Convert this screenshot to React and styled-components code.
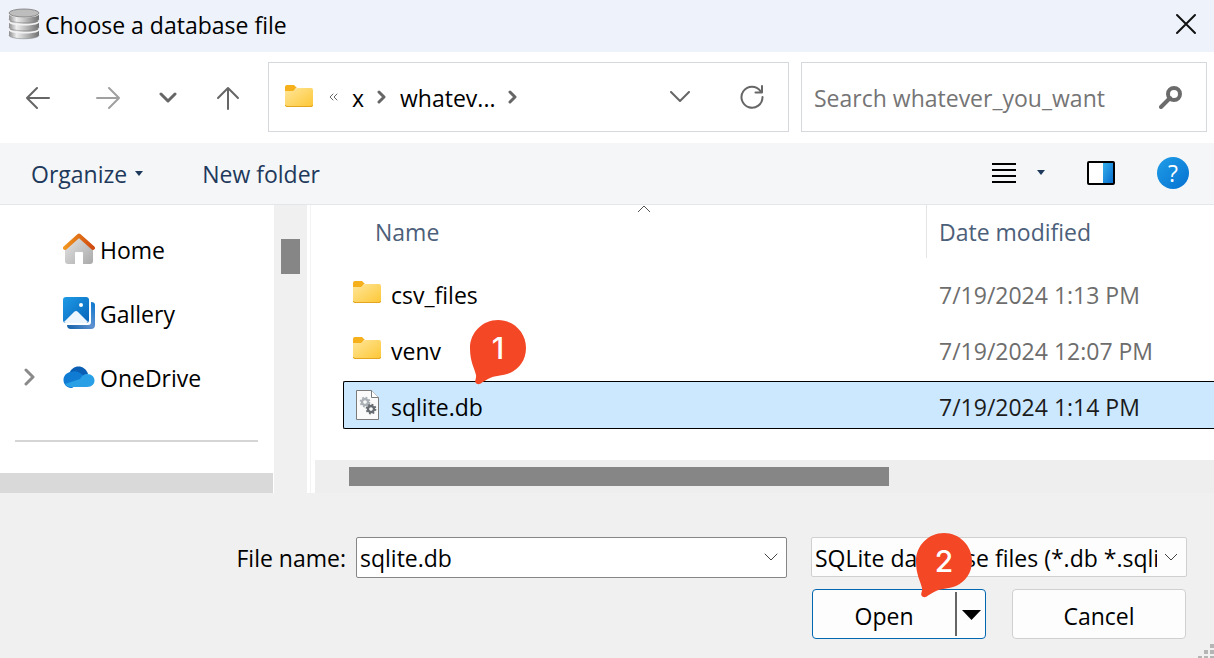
import React, { useState } from "react";
import styled, { createGlobalStyle } from "styled-components";

const GlobalStyle = createGlobalStyle`
  * {
    box-sizing: border-box;
  }
  body {
    margin: 0;
    background: #f0f0f0;
  }
  body, button, input, select {
    font-family: "Open Sans", "Noto Sans", sans-serif;
    font-size: 23px;
    line-height: 32px;
    color: #000;
  }
  button {
    padding: 0;
    border: 0;
    background: none;
  }
  svg {
    display: block;
    flex-shrink: 0;
  }
`;

const Dialog = styled.main`
  display: flex;
  flex-direction: column;
  min-height: 100vh;
  overflow: hidden;
`;

const TitleBar = styled.header`
  display: flex;
  align-items: center;
  gap: 5px;
  height: 52px;
  padding: 0 16px 5px 8px;
  background: #eef3fb;
`;

const Title = styled.h1`
  flex: 1;
  margin: 0;
  padding-top: 2px;
  font-size: 23px;
  font-weight: 400;
`;

const IconButton = styled.button`
  display: flex;
  align-items: center;
  justify-content: center;
  width: ${(props) => props.$width || 24}px;
  height: 36px;
`;

const NavBar = styled.nav`
  display: flex;
  gap: 12px;
  height: 91px;
  padding: 10px 7px 11px 26px;
  background: #fff;
`;

const NavButtons = styled.div`
  display: flex;
  align-items: center;
  gap: 36px;
  margin-right: 16px;
  padding-top: 2px;
  button:first-child {
    margin-right: 10px;
  }
`;

const AddressBar = styled.div`
  display: flex;
  flex: 1;
  align-items: center;
  min-width: 0;
  padding: 0 24px 0 15px;
  border: 1px solid #d5d8dc;
`;

const Crumbs = styled.div`
  display: flex;
  flex: 1;
  align-items: center;
  gap: 13px;
`;

const Crumb = styled.a`
  padding-top: 2px;
  color: #000;
  text-decoration: none;
`;

const AddressButtons = styled.div`
  display: flex;
  gap: 48px;
`;

const SearchBox = styled.label`
  display: flex;
  align-items: center;
  width: 406px;
  padding: 0 23px 0 12px;
  border: 1px solid #d5d8dc;
`;

const SearchInput = styled.input`
  flex: 1;
  min-width: 0;
  padding: 2px 0 0;
  border: 0;
  outline: 0;
  background: none;
  &::placeholder {
    color: #757575;
    opacity: 1;
  }
`;

const Toolbar = styled.div`
  display: flex;
  align-items: center;
  height: 62px;
  padding: 0 25px 0 31px;
  border-bottom: 1px solid #e4e7e9;
  background: #f4f6f8;
`;

const TextButton = styled.button`
  display: flex;
  align-items: center;
  gap: 8px;
  margin-right: 59px;
  color: #1e395b;
`;

const ToolbarRight = styled.div`
  display: flex;
  align-items: center;
  gap: 42px;
  margin-left: auto;
  padding-bottom: 2px;
`;

const ViewButton = styled(IconButton)`
  gap: 20px;
  width: 54px;
`;

const HelpButton = styled.button`
  width: 32px;
  height: 32px;
  border-radius: 50%;
  background: linear-gradient(135deg, #1f9de8, #0671d0);
  color: #fff;
`;

const Body = styled.div`
  display: flex;
  flex: 1;
  min-height: 288px;
  background: #fff;
`;

const Sidebar = styled.aside`
  display: flex;
  flex-direction: column;
  width: 274px;
`;

const Places = styled.ul`
  margin: 0;
  padding: 12px 0 31px;
  list-style: none;
`;

const Place = styled.li`
  display: grid;
  grid-template-columns: 40px auto 1fr;
  align-items: center;
  gap: 5px;
  height: 64px;
  padding-left: 18px;
`;

const PlaceLink = styled.a`
  padding-top: 2px;
  color: #000;
  text-decoration: none;
`;

const Separator = styled.hr`
  width: 243px;
  margin: 0 15px;
  border: 0;
  border-top: 2px solid #d5d5d5;
`;

const SidebarScroll = styled.div`
  width: 273px;
  height: 20px;
  margin-top: auto;
  background: #d9d9d9;
`;

const VerticalTrack = styled.div`
  width: 33px;
  padding: 34px 7px 0;
  background: #f0f0f0;
`;

const VerticalThumb = styled.div`
  height: 35px;
  background: #868686;
`;

const Splitter = styled.div`
  width: 8px;
  border-right: 4px solid #fff;
  border-left: 3px solid #fff;
  background: #f3f3f3;
`;

const ListPane = styled.section`
  display: flex;
  flex: 1;
  flex-direction: column;
  min-width: 0;
`;

const FileTable = styled.table`
  display: block;
  flex: 1;
  padding-left: 28px;
  thead, tbody {
    display: block;
  }
`;

const HeaderRow = styled.tr`
  display: grid;
  grid-template-columns: minmax(0, 1fr) 288px;
  height: 53px;
  margin-bottom: 11px;
`;

const HeaderCell = styled.th`
  position: relative;
  padding: 11px 0 0 ${(props) => (props.$divided ? 12 : 32)}px;
  border-left: ${(props) => (props.$divided ? "1px solid #e2e4e6" : 0)};
  color: #4c607a;
  font-weight: 400;
  text-align: left;
`;

const SortMark = styled.svg`
  position: absolute;
  top: 0;
  left: 294px;
`;

const FileRow = styled.tr`
  display: grid;
  grid-template-columns: minmax(0, 1fr) 288px;
  align-items: center;
  height: 48px;
  margin-bottom: 8px;
  border: 1px solid ${(props) => (props.$selected ? "#000" : "transparent")};
  border-right: 0;
  border-radius: 2px 0 0 2px;
  background: ${(props) => (props.$selected ? "#cce8ff" : "transparent")};
`;

const NameCell = styled.td`
  display: flex;
  align-items: center;
  gap: 9px;
  padding: 0 0 0 8px;
`;

const FileName = styled.span`
  position: relative;
  padding-top: 4px;
`;

const DateCell = styled.td`
  padding: 4px 0 0 13px;
  color: ${(props) => (props.$selected ? "#1b1b1b" : "#6d6d6d")};
`;

const HorizontalTrack = styled.div`
  height: 33px;
  padding: 7px 34px;
  background: #eee;
`;

const HorizontalThumb = styled.div`
  width: 65%;
  height: 19px;
  background: #868686;
`;

const Footer = styled.footer`
  position: relative;
  display: grid;
  grid-template-columns: 346px minmax(0, 1fr) 376px;
  grid-template-rows: 41px 50px;
  row-gap: 11px;
  height: 165px;
  padding: 44px 27px 0 0;
`;

const FieldLabel = styled.label`
  padding-top: 5px;
  text-align: right;
`;

const ComboBox = styled.div`
  display: flex;
  align-items: center;
  margin: 0 24px 0 10px;
  padding: 0 8px 0 3px;
  border: 1px solid #868686;
  border-radius: 2px;
  background: #fff;
`;

const ComboInput = styled.input`
  flex: 1;
  min-width: 0;
  padding: 0;
  border: 0;
  outline: 0;
  background: none;
`;

const FilterBox = styled.div`
  position: relative;
  height: 40px;
`;

const FilterSelect = styled.select`
  width: 100%;
  height: 40px;
  padding: 2px 29px 0 3px;
  border: 1px solid #d0d0d0;
  border-radius: 2px;
  background: #fdfdfd;
  appearance: none;
  overflow: hidden;
  text-overflow: clip;
`;

const FilterArrow = styled.svg`
  position: absolute;
  top: 16px;
  right: 9px;
  pointer-events: none;
`;

const Actions = styled.div`
  display: grid;
  grid-column: 3;
  grid-template-columns: 1fr 1fr;
  gap: 26px;
  padding: 0 1px;
`;

const SplitButton = styled.div`
  display: flex;
  align-items: center;
  border: 1px solid #0067b0;
  border-radius: 4px;
  background: #fdfdfd;
`;

const OpenButton = styled.button`
  flex: 1;
  padding-top: 3px;
`;

const OpenMenuButton = styled.button`
  display: flex;
  align-items: center;
  justify-content: center;
  width: 30px;
  height: 44px;
  padding-top: 2px;
  border-left: 2px solid #666;
`;

const CancelButton = styled.button`
  padding-top: 3px;
  border: 1px solid #d0d0d0;
  border-radius: 4px;
  background: #fdfdfd;
`;

const PinWrapper = styled.div`
  position: absolute;
  top: ${(props) => props.$top}px;
  left: ${(props) => props.$left}px;
  z-index: 1;
  width: 56px;
  height: 65px;
`;

const PinShape = styled.svg`
  position: absolute;
  inset: 0;
`;

const PinNumber = styled.span`
  position: relative;
  display: block;
  color: #fff;
  font-family: Inter, sans-serif;
  font-size: 30px;
  font-weight: 500;
  line-height: 56px;
  text-align: center;
`;

const SizeGrip = styled.svg`
  position: absolute;
  right: 0;
  bottom: 0;
`;

const Line = ({ d, w, h, color = "#666", stroke = 2 }) => (
  <svg width={w} height={h} viewBox={`0 0 ${w} ${h}`} fill="none">
    <path d={d} stroke={color} strokeWidth={stroke} strokeLinecap="round" strokeLinejoin="round" />
  </svg>
);

const CrumbChevron = () => <Line w={10} h={14} d="M2 2l5 5-5 5" stroke={3} />;

const DatabaseIcon = () => (
  <svg width="32" height="32" viewBox="0 0 32 32">
    <defs>
      <linearGradient id="metal">
        <stop offset="0" stopColor="#8d8d8d" />
        <stop offset=".25" stopColor="#eee" />
        <stop offset=".6" stopColor="#b5b5b5" />
        <stop offset="1" stopColor="#707070" />
      </linearGradient>
    </defs>
    {[19, 11, 3].map((y) => (
      <g key={y}>
        <path d={`M1 ${y + 2}v6c0 5 30 5 30 0v-6z`} fill="url(#metal)" />
        <path d={`M1 ${y + 2}c0 5 30 5 30 0`} fill="none" stroke="#f2f2f2" strokeWidth="1.500" />
        <path d={`M1 ${y + 8}c0 5 30 5 30 0`} fill="none" stroke="#888" strokeWidth=".6" />
      </g>
    ))}
    <ellipse cx="16" cy="5" rx="15" ry="4" fill="#bdbdbd" stroke="#777" strokeWidth=".8" />
  </svg>
);

const FolderIcon = () => (
  <svg width="30" height="26" viewBox="0 0 30 26">
    <defs>
      <linearGradient id="folder" x1="0" y1="0" x2="1" y2="1">
        <stop offset="0" stopColor="#ffe69a" />
        <stop offset="1" stopColor="#fdc735" />
      </linearGradient>
    </defs>
    <path d="M1 3q0-2 2-2h7l3 3h-1l-3 4H1z" fill="#f5b01c" />
    <path d="M1 7h8l4-3h14q2 0 2 2v15q0 2-2 2H3q-2 0-2-2z" fill="url(#folder)" />
    <path d="M1.500 21q0 1.500 1.500 1.500h24q1.500 0 1.500-1.500" fill="none" stroke="#e3a51f" />
  </svg>
);

const HomeIcon = () => (
  <svg width="32" height="32" viewBox="0 0 32 32">
    <defs>
      <linearGradient id="wall" x1="0" y1="0" x2="1" y2="1">
        <stop offset="0" stopColor="#e6e6e6" />
        <stop offset="1" stopColor="#a9a9a9" />
      </linearGradient>
      <linearGradient id="roof">
        <stop offset="0" stopColor="#f0951e" />
        <stop offset="1" stopColor="#cf4a10" />
      </linearGradient>
    </defs>
    <path d="M2 16L16 3l14 13v12q0 3-3 3h-7V20q0-1-1-1h-6q-1 0-1 1v11H5q-3 0-3-3z" fill="url(#wall)" />
    <path d="M2 15L16 2.500 30 15" fill="none" stroke="url(#roof)" strokeWidth="4" strokeLinecap="round" strokeLinejoin="round" />
  </svg>
);

const GalleryIcon = () => (
  <svg width="32" height="32" viewBox="0 0 32 32">
    <defs>
      <linearGradient id="photo" x1="0" y1="0" x2="1" y2="1">
        <stop offset="0" stopColor="#1e9be6" />
        <stop offset="1" stopColor="#0762b8" />
      </linearGradient>
      <linearGradient id="stack" x1="0" y1="1" x2="1" y2="0">
        <stop offset="0" stopColor="#0f5ea8" />
        <stop offset=".5" stopColor="#5f91cf" />
        <stop offset="1" stopColor="#0877cf" />
      </linearGradient>
    </defs>
    <path d="M28 5q4 0 4 3v20q0 4-4 4H8q-4 0-4-4h21q3 0 3-3z" fill="url(#stack)" />
    <rect width="26" height="26" rx="3" fill="url(#photo)" />
    <path d="M1 25l10-10q2-2 4 0l10 10q-1 1-2 1H3q-1 0-2-1z" fill="#edf5ff" />
    <circle cx="18" cy="8" r="2" fill="#fff" />
  </svg>
);

const OneDriveIcon = () => (
  <svg width="32" height="32" viewBox="0 0 32 32">
    <path d="M6 13C9 3 22 3 25 13l-7 5z" fill="#0a5fb4" />
    <path d="M8 11q5-2 9 1l7 5-15 10H8C-2 26-2 12 8 11z" fill="#0f7bd3" />
    <path d="M17 18q3-5 7-5c10 0 10 13 0 13H8q-4 0-6-3z" fill="#29a0e6" />
  </svg>
);

const Gear = ({ x, y, color }) => (
  <g transform={`translate(${x} ${y})`}>
    <circle r="3" fill="none" stroke={color} strokeWidth="2.400" />
    <circle r="4.500" fill="none" stroke={color} strokeWidth="1.800" strokeDasharray="1.800 1.734" />
  </g>
);

const DatabaseFileIcon = () => (
  <svg width="30" height="30" viewBox="0 0 30 30">
    <path d="M4.500.5h15l7 7v22h-22z" fill="#fafafa" stroke="#7b7b7b" />
    <path d="M19.500.5v7h7" fill="#fff" stroke="#7b7b7b" />
    <Gear x={13} y={12} color="#aab0b5" />
    <Gear x={19} y={19} color="#666c71" />
  </svg>
);

const Caret = ({ w = 8, h = 5, color = "#1e395b" }) => (
  <svg width={w} height={h} viewBox="0 0 8 4" preserveAspectRatio="none">
    <path d="M0 0h8L4 4z" fill={color} />
  </svg>
);

const Pin = ({ number, top, left }) => (
  <PinWrapper $top={top} $left={left}>
    <PinShape width="56" height="65" viewBox="0 0 56 65">
      <path
        d="M28 0C43.500 0 56 12.500 56 28c0 12-7 21-16 25-8 3-15 2-22 6l-6 3.500c-2 2-5 2.500-6.500 0-1-2 1-4 .5-7.500C4.500 48 0 42 0 28 0 12.500 12.500 0 28 0z"
        fill="#f44725"
      />
    </PinShape>
    <PinNumber>{number}</PinNumber>
  </PinWrapper>
);

const places = [
  { name: "Home", icon: <HomeIcon /> },
  { name: "Gallery", icon: <GalleryIcon /> },
  { name: "OneDrive", icon: <OneDriveIcon />, expandable: true },
];

const files = [
  { name: "csv_files", date: "7/19/2024 1:13 PM", folder: true },
  { name: "venv", date: "7/19/2024 12:07 PM", folder: true },
  { name: "sqlite.db", date: "7/19/2024 1:14 PM", pin: 1 },
];

function App() {
  const [fileName, setFileName] = useState("sqlite.db");

  return (
    <Dialog>
      <GlobalStyle />
      <TitleBar>
        <DatabaseIcon />
        <Title>Choose a database file</Title>
        <IconButton aria-label="Close">
          <Line w={22} h={22} d="M2 2l18 18M20 2L2 20" color="#111" />
        </IconButton>
      </TitleBar>

      <NavBar>
        <NavButtons>
          <IconButton aria-label="Back">
            <Line w={24} h={24} d="M23 12H1M11 2L1 12l10 10" />
          </IconButton>
          <IconButton aria-label="Forward">
            <Line w={24} h={24} d="M1 12h22M13 2l10 10-10 10" color="#a0a0a0" />
          </IconButton>
          <IconButton aria-label="Recent locations">
            <Line w={18} h={12} d="M2 2l7 7 7-7" stroke={3} />
          </IconButton>
          <IconButton aria-label="Up">
            <Line w={24} h={24} d="M12 23V2M2 12L12 2l10 10" />
          </IconButton>
        </NavButtons>
        <AddressBar>
          <Crumbs>
            <FolderIcon />
            <Line w={12} h={10} d="M6 2L3 5l3 3M10 2L7 5l3 3" stroke={1} />
            <Crumb href="#x">x</Crumb>
            <CrumbChevron />
            <Crumb href="#whatever">whatev...</Crumb>
            <CrumbChevron />
          </Crumbs>
          <AddressButtons>
            <IconButton aria-label="Previous locations">
              <Line w={20} h={12} d="M1 1l9 9 9-9" />
            </IconButton>
            <IconButton aria-label="Refresh">
              <Line w={24} h={24} d="M20.500 6A10.500 10.500 0 1 0 22.500 12M22 1v6.500h-6.500" />
            </IconButton>
          </AddressButtons>
        </AddressBar>
        <SearchBox>
          <SearchInput aria-label="Search" placeholder="Search whatever_you_want" />
          <svg width="24" height="24" viewBox="0 0 24 24" fill="none" stroke="#6b6b6b">
            <circle cx="15" cy="9" r="6" strokeWidth="4" />
            <path d="M11 13l-9 9" strokeWidth="4" strokeLinecap="round" />
          </svg>
        </SearchBox>
      </NavBar>

      <Toolbar>
        <TextButton>
          Organize
          <Caret />
        </TextButton>
        <TextButton>New folder</TextButton>
        <ToolbarRight>
          <ViewButton aria-label="Change your view">
            <svg width="26" height="20" viewBox="0 0 26 20">
              <path d="M1 1h24M1 7h24M1 13h24M1 19h24" stroke="#000" strokeWidth="2" />
            </svg>
            <Caret />
          </ViewButton>
          <IconButton $width={28} aria-label="Preview pane">
            <svg width="28" height="24" viewBox="0 0 28 24">
              <defs>
                <linearGradient id="pane" x1="0" y1="0" x2="1" y2="1">
                  <stop offset="0" stopColor="#37b1ec" />
                  <stop offset="1" stopColor="#0569cd" />
                </linearGradient>
              </defs>
              <rect x="1" y="1" width="26" height="22" rx="1" fill="#fff" />
              <path d="M16 1h11v22H16z" fill="url(#pane)" />
              <rect x="1" y="1" width="26" height="22" rx="1" fill="none" stroke="#000" strokeWidth="2" />
            </svg>
          </IconButton>
          <HelpButton>?</HelpButton>
        </ToolbarRight>
      </Toolbar>

      <Body>
        <Sidebar>
          <Places>
            {places.map((place) => (
              <Place key={place.name}>
                <div>
                  {place.expandable && (
                    <IconButton aria-label={`Expand ${place.name}`}>
                      <Line w={12} h={18} d="M2 2l7 7-7 7" stroke={3} color="#8a8a8a" />
                    </IconButton>
                  )}
                </div>
                {place.icon}
                <PlaceLink href={`#${place.name}`}>{place.name}</PlaceLink>
              </Place>
            ))}
          </Places>
          <Separator />
          <SidebarScroll />
        </Sidebar>
        <VerticalTrack>
          <VerticalThumb />
        </VerticalTrack>
        <Splitter />
        <ListPane>
          <FileTable>
            <thead>
              <HeaderRow>
                <HeaderCell>
                  Name
                  <SortMark width="14" height="9" viewBox="0 0 14 9" fill="none">
                    <path d="M1 7l6-6 6 6" stroke="#555" />
                  </SortMark>
                </HeaderCell>
                <HeaderCell $divided>Date modified</HeaderCell>
              </HeaderRow>
            </thead>
            <tbody>
              {files.map((file) => (
                <FileRow key={file.name} $selected={file.name === fileName}>
                  <NameCell>
                    {file.folder ? <FolderIcon /> : <DatabaseFileIcon />}
                    <FileName>
                      {file.name}
                      {file.pin && <Pin number={file.pin} top={-67} left={79} />}
                    </FileName>
                  </NameCell>
                  <DateCell $selected={file.name === fileName}>{file.date}</DateCell>
                </FileRow>
              ))}
            </tbody>
          </FileTable>
          <HorizontalTrack>
            <HorizontalThumb />
          </HorizontalTrack>
        </ListPane>
      </Body>

      <Footer>
        <FieldLabel htmlFor="file-name">File name:</FieldLabel>
        <ComboBox>
          <ComboInput id="file-name" value={fileName} onChange={(e) => setFileName(e.target.value)} />
          <IconButton $width={14} aria-label="Show recent files">
            <Line w={14} h={9} d="M1 1l6 6 6-6" stroke={1} color="#444" />
          </IconButton>
        </ComboBox>
        <FilterBox>
          <FilterSelect aria-label="File type">
            <option>SQLite database files (*.db *.sqlite)</option>
            <option>All files (*)</option>
          </FilterSelect>
          <FilterArrow width="14" height="9" viewBox="0 0 14 9" fill="none">
            <path d="M1 1l6 6 6-6" stroke="#444" />
          </FilterArrow>
          <Pin number={2} top={-4} left={105} />
        </FilterBox>
        <Actions>
          <SplitButton>
            <OpenButton>Open</OpenButton>
            <OpenMenuButton aria-label="Open options">
              <Caret w={19} h={10} color="#000" />
            </OpenMenuButton>
          </SplitButton>
          <CancelButton>Cancel</CancelButton>
        </Actions>
        <SizeGrip width="16" height="14" viewBox="0 0 16 14" fill="#b5b5b5">
          <path d="M12 0h4v4h-4zM6 6h4v4H6zM12 6h4v4h-4zM0 12h4v4H0zM6 12h4v4H6zM12 12h4v4h-4z" />
        </SizeGrip>
      </Footer>
    </Dialog>
  );
}

export default App;
